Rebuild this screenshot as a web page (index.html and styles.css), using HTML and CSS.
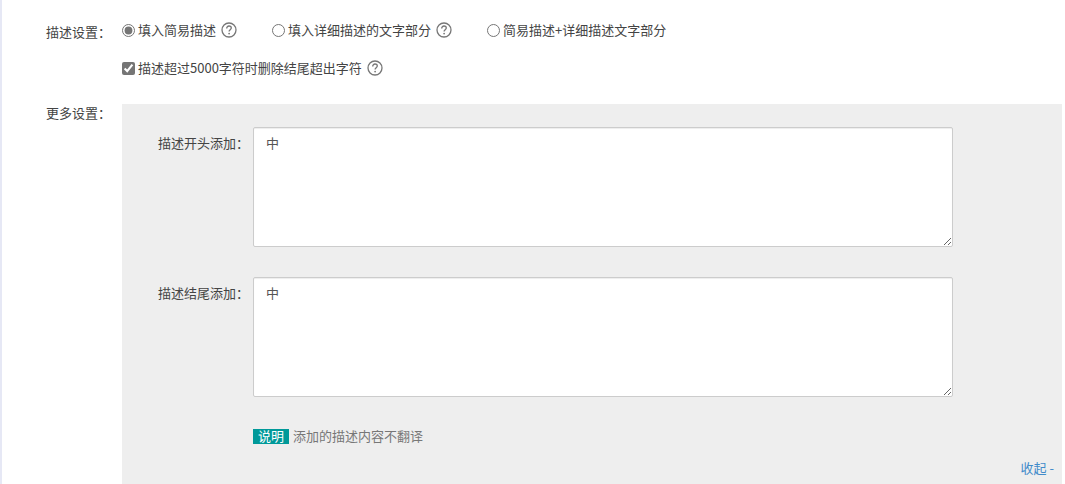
FILE: index.html
```
<!DOCTYPE html>
<html lang="zh-CN">
<head>
    <meta charset="UTF-8">
    <meta name="viewport" content="width=device-width, initial-scale=1.0">
    <title>描述设置</title>
    <link rel="stylesheet" href="styles.css">
</head>
<body>
    <svg class="icon-defs" aria-hidden="true">
        <symbol id="icon-help" viewBox="0 0 16 16">
            <circle cx="8" cy="8" r="7" fill="none" stroke="currentColor" stroke-width="1.3"/>
            <path d="M5.7 6.4C5.7 4.9 6.7 4 8 4s2.3.9 2.3 2.1c0 1.6-2.2 1.8-2.2 3.4" fill="none" stroke="currentColor" stroke-width="1.3"/>
            <circle cx="8.1" cy="11.6" r="0.9" fill="currentColor"/>
        </symbol>
    </svg>

    <form class="settings">
        <!-- 描述设置 -->
        <div class="row">
            <div class="row-label">描述设置：</div>
            <div class="row-content">
                <div class="options">
                    <div class="option">
                        <input type="radio" name="desc" id="desc-simple" checked>
                        <label for="desc-simple">填入简易描述</label>
                        <svg class="help"><use href="#icon-help"/></svg>
                    </div>
                    <div class="option">
                        <input type="radio" name="desc" id="desc-detail">
                        <label for="desc-detail">填入详细描述的文字部分</label>
                        <svg class="help"><use href="#icon-help"/></svg>
                    </div>
                    <div class="option">
                        <input type="radio" name="desc" id="desc-both">
                        <label for="desc-both">简易描述+详细描述文字部分</label>
                    </div>
                </div>
                <div class="option">
                    <input type="checkbox" id="desc-cut" checked>
                    <label for="desc-cut">描述超过5000字符时删除结尾超出字符</label>
                    <svg class="help"><use href="#icon-help"/></svg>
                </div>
            </div>
        </div>

        <!-- 更多设置 -->
        <div class="row">
            <div class="row-label">更多设置：</div>
            <div class="row-content panel">
                <div class="field">
                    <label for="desc-start">描述开头添加：</label>
                    <textarea id="desc-start">中</textarea>
                </div>
                <div class="field">
                    <label for="desc-end">描述结尾添加：</label>
                    <textarea id="desc-end">中</textarea>
                </div>
                <p class="note"><span class="tag">说明</span>添加的描述内容不翻译</p>
                <a href="#" class="collapse">收起 -</a>
            </div>
        </div>
    </form>
</body>
</html>
```
FILE: styles.css
```
* {
    box-sizing: border-box;
}

body {
    margin: 0;
    min-height: 100vh;
    border-left: 2px solid #e6e8f5;
    background: #fff;
    color: #444;
    font-family: "Noto Sans CJK SC", sans-serif;
    font-size: 13px;
    line-height: 20px;
}

.icon-defs {
    display: none;
}

.settings {
    display: flex;
    flex-direction: column;
    gap: 26px;
    padding: 20px 3px 0 0;
}

.row {
    display: flex;
}

.row-label {
    width: 120px;
    padding: 0 11px 0 0;
    line-height: 18px;
    text-align: right;
}

.row:first-child .row-label {
    padding-top: 3px;
}

.row-content {
    flex: 1;
}

.options {
    display: flex;
    gap: 35px;
    margin-bottom: 18px;
}

.option {
    display: flex;
    align-items: center;
}

.option input {
    width: 13px;
    height: 13px;
    margin: 0 3px 0 0;
    accent-color: #757575;
}

.help {
    width: 16px;
    height: 16px;
    margin-left: 5px;
    color: #777;
}

.panel {
    display: flex;
    flex-direction: column;
    padding: 23px 8px 7px 36px;
    background: #eee;
}

.field {
    display: flex;
    margin-bottom: 30px;
}

.field label {
    width: 95px;
    padding-top: 7px;
    line-height: 18px;
}

.field textarea {
    width: 700px;
    max-width: calc(100% - 95px);
    height: 120px;
    padding: 6px 12px;
    border: 1px solid #ccc;
    border-radius: 2px;
    box-shadow: inset 0 1px 1px rgba(0, 0, 0, 0.075);
    background: #fff;
    color: #555;
    font: inherit;
    line-height: 18px;
}

.note {
    display: flex;
    align-items: center;
    gap: 4px;
    margin: 0 0 13px 95px;
    color: #777;
    line-height: 18px;
}

.tag {
    padding: 0 5px 2px;
    background: #009999;
    color: #fff;
    line-height: 13px;
}

.collapse {
    align-self: flex-end;
    color: #428bca;
    text-decoration: none;
}
```
